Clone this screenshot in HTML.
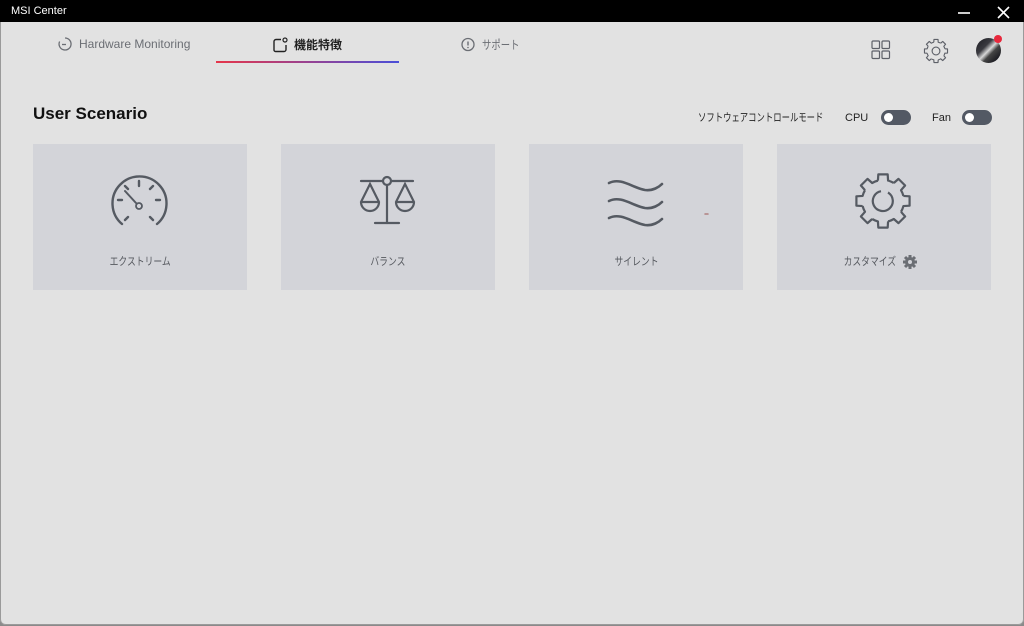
<!DOCTYPE html>
<html><head><meta charset="utf-8">
<style>
*{margin:0;padding:0;box-sizing:border-box}
html,body{width:1024px;height:626px;overflow:hidden;background:#8a8a8a}
body{font-family:"Liberation Sans","Noto Sans CJK JP",sans-serif;position:relative}
.win{position:absolute;left:0;top:0;width:1024px;height:625px;background:#e2e2e2;border-radius:0 0 6px 6px;overflow:hidden;box-shadow:inset 1px 0 0 #9a9a9a,inset -1px 0 0 #9a9a9a,inset 0 -1px 0 #9a9a9a}
.title{position:absolute;left:0;top:0;width:1024px;height:22px;background:#000;color:#fff;font-size:11px;line-height:22px;padding-left:11px}
.tab{position:absolute;top:36px;font-size:12px;color:#6b6e74;display:flex;align-items:center;gap:6px}
.sq{display:inline-block;transform:scaleX(.78);transform-origin:left center}
.card{position:absolute;top:144px;width:214px;height:146px;background:#d3d4d9}
.card .lbl{position:absolute;top:109px;left:0;width:100%;text-align:center;font-size:11px;color:#55585e}
.card .lbl span{display:inline-block;transform:scaleX(.8)}
.card svg{position:absolute;left:0;top:0}
.tog{position:absolute;top:110px;width:30px;height:15px;border-radius:8px;background:#535964}
.tog::after{content:"";position:absolute;left:3px;top:3px;width:9px;height:9px;border-radius:50%;background:#fff}
.t{position:absolute;font-size:11px;color:#222;top:111px;line-height:14px;white-space:nowrap}
</style></head><body>
<div class="win">
<div class="title">MSI Center</div>
<svg style="position:absolute;left:955px;top:5px" width="60" height="14"><line x1="3" y1="8" x2="15" y2="8" stroke="#fff" stroke-width="1.6"/><line x1="43" y1="2" x2="54" y2="13" stroke="#fff" stroke-width="1.6"/><line x1="54" y1="2" x2="43" y2="13" stroke="#fff" stroke-width="1.6"/></svg>

<div class="tab" style="left:57px"><svg width="16" height="16"><path d="M8 2 A6 6 0 1 1 2.6 5.5" fill="none" stroke="#6b6e74" stroke-width="1.3"/><line x1="5" y1="8.5" x2="9" y2="8.5" stroke="#6b6e74" stroke-width="1.3"/></svg>Hardware Monitoring</div>
<div class="tab" style="left:272px;color:#222;font-weight:bold"><svg width="16" height="16"><path d="M9 2.5 H4 a2 2 0 0 0 -2 2 V13 a1.5 1.5 0 0 0 1.5 1.5 H12 a2 2 0 0 0 2 -2 V8" fill="none" stroke="#222" stroke-width="1.4"/><circle cx="13" cy="3" r="2" fill="none" stroke="#222" stroke-width="1.2"/></svg>機能特徴</div>
<div style="position:absolute;left:216px;top:61px;width:183px;height:2px;background:linear-gradient(90deg,#e6364a,#4a4ed8)"></div>
<div class="tab" style="left:460px"><svg width="16" height="16"><circle cx="8" cy="7.5" r="6" fill="none" stroke="#6b6e74" stroke-width="1.3"/><line x1="8" y1="4.5" x2="8" y2="8.5" stroke="#6b6e74" stroke-width="1.4"/><circle cx="8" cy="10.5" r=".8" fill="#6b6e74"/></svg><span class="sq">サポート</span></div>

<svg style="position:absolute;left:870px;top:39px" width="22" height="22" fill="none" stroke="#5d6068" stroke-width="1.2"><rect x="2" y="2" width="7.5" height="7.5" rx="1"/><rect x="12" y="2" width="7.5" height="7.5" rx="1"/><rect x="2" y="12" width="7.5" height="7.5" rx="1"/><rect x="12" y="12" width="7.5" height="7.5" rx="1"/></svg>
<svg style="position:absolute;left:923px;top:38px" width="26" height="26" viewBox="-30 -30 60 60"><g fill="none" stroke="#5d6068" stroke-width="2.6" stroke-linejoin="round"><g id="sg"><path d="M-5.08 -20.38 L-4.69 -26.59 L4.69 -26.59 L5.08 -20.38 A21 21 0 0 1 10.82 -18.0"/></g><use href="#sg" transform="rotate(45)"/><use href="#sg" transform="rotate(90)"/><use href="#sg" transform="rotate(135)"/><use href="#sg" transform="rotate(180)"/><use href="#sg" transform="rotate(225)"/><use href="#sg" transform="rotate(270)"/><use href="#sg" transform="rotate(315)"/><circle r="9"/></g></svg>
<div style="position:absolute;left:976px;top:38px;width:25px;height:25px;border-radius:50%;background:linear-gradient(135deg,#1c1c22 0,#3a3a40 35%,#d8d8d8 50%,#444 62%,#1c1c22 85%)"></div>
<div style="position:absolute;left:994px;top:35px;width:8px;height:8px;border-radius:50%;background:#e8283c"></div>

<div style="position:absolute;left:33px;top:104px;font-size:17px;font-weight:bold;color:#111">User Scenario</div>
<div class="t" style="left:698px"><span class="sq" style="transform:scaleX(.76)">ソフトウェアコントロールモード</span></div>
<div class="t" style="left:845px">CPU</div>
<div class="tog" style="left:881px"></div>
<div class="t" style="left:932px">Fan</div>
<div class="tog" style="left:962px"></div>

<div class="card" style="left:33px">
<svg width="214" height="146" fill="none" stroke="#555a62" stroke-width="2.4" stroke-linecap="round">
<path d="M89 80 A27 27 0 1 1 124 80"/>
<path d="M106 37v5M85 56h4M127 56h-4M92 42l3 3M120 42l-3 3M92 76l3 -3M120 76l-3 -3"/>
<line x1="92" y1="47" x2="103" y2="59" stroke-width="2"/>
<circle cx="106" cy="62" r="3" stroke-width="1.8"/>
</svg><div class="lbl"><span>エクストリーム</span></div></div>

<div class="card" style="left:281px">
<svg width="214" height="146" fill="none" stroke="#555a62" stroke-width="2.2" stroke-linecap="round">
<line x1="80" y1="37" x2="102" y2="37"/><line x1="110" y1="37" x2="132" y2="37"/>
<circle cx="106" cy="37" r="4"/><line x1="106" y1="41" x2="106" y2="79"/><line x1="94" y1="79" x2="118" y2="79"/>
<path d="M89 40 L80 58 A9 9 0 0 0 98 58 Z M80 58 H98"/>
<path d="M124 40 L115 58 A9 9 0 0 0 133 58 Z M115 58 H133"/>
</svg><div class="lbl"><span>バランス</span></div></div>

<div class="card" style="left:529px">
<svg width="214" height="146" fill="none" stroke="#555a62" stroke-width="2.6" stroke-linecap="round">
<path d="M80 39 C92 33,104 44,116 46 C124 47,130 43,133 40"/>
<path d="M80 57 C92 51,104 62,116 64 C124 65,130 61,133 58"/>
<path d="M80 74 C92 68,104 79,116 81 C124 82,130 78,133 75"/>
<line x1="176" y1="70" x2="179" y2="70" stroke="#b08080" stroke-width="1.5"/>
</svg><div class="lbl"><span>サイレント</span></div></div>

<div class="card" style="left:777px">
<svg width="214" height="146" viewBox="0 0 214 146"><g transform="translate(106 57)" fill="none" stroke="#555a62" stroke-width="2.2" stroke-linejoin="round"><g id="bg"><path d="M-5.08 -20.38 L-4.69 -26.59 L4.69 -26.59 L5.08 -20.38 A21 21 0 0 1 10.82 -18.0"/></g><use href="#bg" transform="rotate(45)"/><use href="#bg" transform="rotate(90)"/><use href="#bg" transform="rotate(135)"/><use href="#bg" transform="rotate(180)"/><use href="#bg" transform="rotate(225)"/><use href="#bg" transform="rotate(270)"/><use href="#bg" transform="rotate(315)"/><path d="M5 -8.5 A10 10 0 1 1 -2 -9.8"/></g>
<g transform="translate(133 118)"><circle r="5" fill="#6b6e74"/><g stroke="#6b6e74" stroke-width="3"><line x1="0" y1="-7" x2="0" y2="7"/><line x1="-7" y1="0" x2="7" y2="0"/><line x1="-5" y1="-5" x2="5" y2="5"/><line x1="-5" y1="5" x2="5" y2="-5"/></g><circle r="2" fill="#d3d4d9"/></g></svg>
<div class="lbl" style="left:-14px"><span>カスタマイズ</span></div></div>
</div>
</body></html>
